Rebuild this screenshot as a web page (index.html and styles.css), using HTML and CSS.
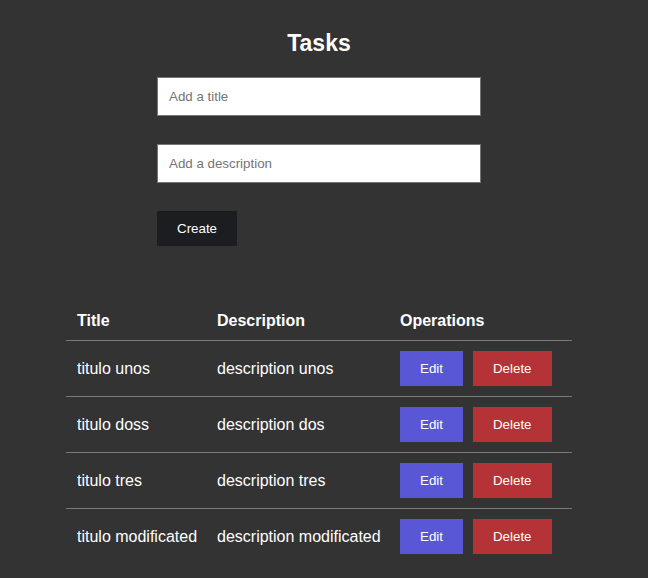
FILE: index.html
```html
<!DOCTYPE html>
<html>
<head>
<meta charset="utf-8">
<link rel="stylesheet" href="styles.css">
</head>
<body>
<div class="app">
  <h1 class="heading">Tasks</h1>
  <form class="task-form">
    <input class="field" type="text" placeholder="Add a title">
    <input class="field" type="text" placeholder="Add a description">
    <div class="form-actions"><button class="btn btn-create" type="button">Create</button></div>
  </form>
  <table class="tasks">
    <colgroup>
      <col class="col-title">
      <col class="col-desc">
      <col class="col-ops">
    </colgroup>
    <thead>
      <tr><th>Title</th><th>Description</th><th>Operations</th></tr>
    </thead>
    <tbody>
      <tr><td>titulo unos</td><td>description unos</td><td><div class="ops"><button class="btn btn-edit">Edit</button><button class="btn btn-delete">Delete</button></div></td></tr>
      <tr><td>titulo doss</td><td>description dos</td><td><div class="ops"><button class="btn btn-edit">Edit</button><button class="btn btn-delete">Delete</button></div></td></tr>
      <tr><td>titulo tres</td><td>description tres</td><td><div class="ops"><button class="btn btn-edit">Edit</button><button class="btn btn-delete">Delete</button></div></td></tr>
      <tr><td>titulo modificated</td><td>description modificated</td><td><div class="ops"><button class="btn btn-edit">Edit</button><button class="btn btn-delete">Delete</button></div></td></tr>
    </tbody>
  </table>
</div>
</body>
</html>
```
FILE: styles.css
```css
html, body {
  margin: 0;
  padding: 0;
  background: #333333;
}
body {
  font-family: "Liberation Sans", Arial, sans-serif;
  color: #ffffff;
}
.app {
  width: 638px;
  display: flex;
  flex-direction: column;
  align-items: center;
}
.heading {
  margin: 30px 0 20px;
  font-size: 23px;
  font-weight: bold;
  line-height: 27px;
}
.task-form {
  width: 324px;
  display: flex;
  flex-direction: column;
  gap: 28px;
}
.field {
  box-sizing: border-box;
  width: 324px;
  height: 39px;
  margin: 0;
  padding: 0 11px;
  border: 1px solid #767676;
  background: #ffffff;
  font-family: "Liberation Sans", Arial, sans-serif;
  font-size: 13.333px;
  color: #000;
  outline: none;
}
.field::placeholder {
  color: #757575;
}
.btn {
  height: 35px;
  padding: 0 20px;
  border: none;
  margin: 0;
  color: #ffffff;
  font-family: "Liberation Sans", Arial, sans-serif;
  font-size: 13.333px;
  cursor: pointer;
}
.btn-create {
  background: #1c1d21;
}
.btn-edit {
  background: #5a57d6;
}
.btn-delete {
  background: #b53336;
}
.tasks {
  margin-top: 56px;
  width: 506px;
  border-collapse: collapse;
  table-layout: fixed;
  font-size: 16px;
}
.col-title { width: 140px; }
.col-desc { width: 183px; }
.col-ops { width: 183px; }
.tasks th, .tasks td {
  padding: 10px 11px;
  text-align: left;
  vertical-align: middle;
  white-space: nowrap;
}
.tasks th {
  font-weight: bold;
  line-height: 18px;
}
.tasks thead tr,
.tasks tbody tr:not(:last-child) {
  border-bottom: 1px solid #7a7a7a;
}
.ops {
  display: flex;
  gap: 10px;
}
```
